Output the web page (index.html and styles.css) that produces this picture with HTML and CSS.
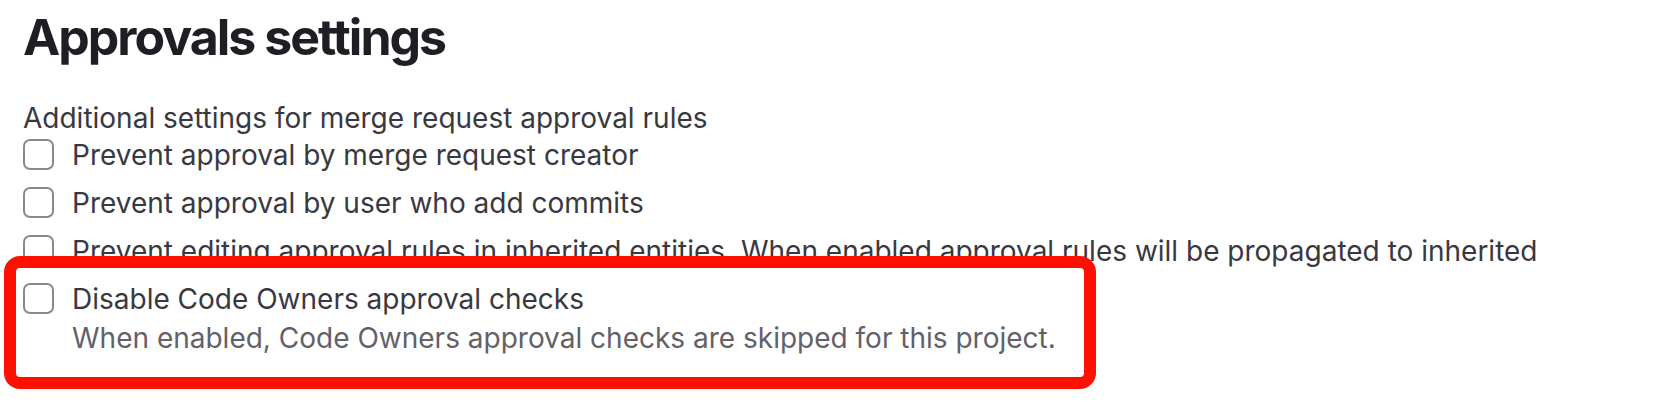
FILE: index.html
```html
<!DOCTYPE html>
<html>
<head>
    <link rel="stylesheet" href="styles.css">
</head>
<body>
    <div class="settings">
        <h2>Approvals settings</h2>
        <p class="section-desc">Additional settings for merge request approval rules</p>

        <div class="option">
            <span class="checkbox"></span>
            <label>Prevent approval by merge request creator</label>
        </div>
        <div class="option">
            <span class="checkbox"></span>
            <label>Prevent approval by user who add commits</label>
        </div>
        <div class="option">
            <span class="checkbox"></span>
            <label>Prevent editing approval rules in inherited entities. When enabled approval rules will be propagated to inherited entities.</label>
        </div>

        <div class="highlight">
            <div class="option">
                <span class="checkbox"></span>
                <div>
                    <label>Disable Code Owners approval checks</label>
                    <p class="help">When enabled, Code Owners approval checks are skipped for this project.</p>
                </div>
            </div>
        </div>
    </div>
</body>
</html>
```

FILE: styles.css
```css
body {
    margin: 0;
    padding: 0 23px;
    font-family: Inter, "Noto Sans", sans-serif;
    color: #3a383f;
    background: #fff;
}
.settings {
    max-width: 1560px;
    display: flex;
    flex-direction: column;
    align-items: flex-start;
}
h2 {
    margin: 7px 0 0;
    font-size: 50px;
    line-height: 60px;
    font-weight: 700;
    color: #1f1e24;
    letter-spacing: -2px;
}
.section-desc {
    margin: 35px 0 0;
    font-size: 28px;
    line-height: 32px;
}
.option {
    display: flex;
    align-items: flex-start;
    gap: 18px;
    margin-top: 12px;
    font-size: 28px;
    line-height: 36px;
}
.section-desc + .option {
    margin-top: 3px;
}
.checkbox {
    flex: none;
    width: 27px;
    height: 27px;
    margin-top: 2px;
    border: 2px solid #89888d;
    border-radius: 7px;
    background: #fff;
}
.help {
    margin: 3px 0 0;
    color: #626168;
}

/* red call-out drawn over the list */
.highlight {
    position: relative;
    margin: -49px 0 0 -19px;
    padding: 13px 28px 21px 7px;
    border: 12px solid #ff1000;
    border-radius: 16px;
    background: #fff;
}
.highlight .option {
    margin-top: 0;
}
```
